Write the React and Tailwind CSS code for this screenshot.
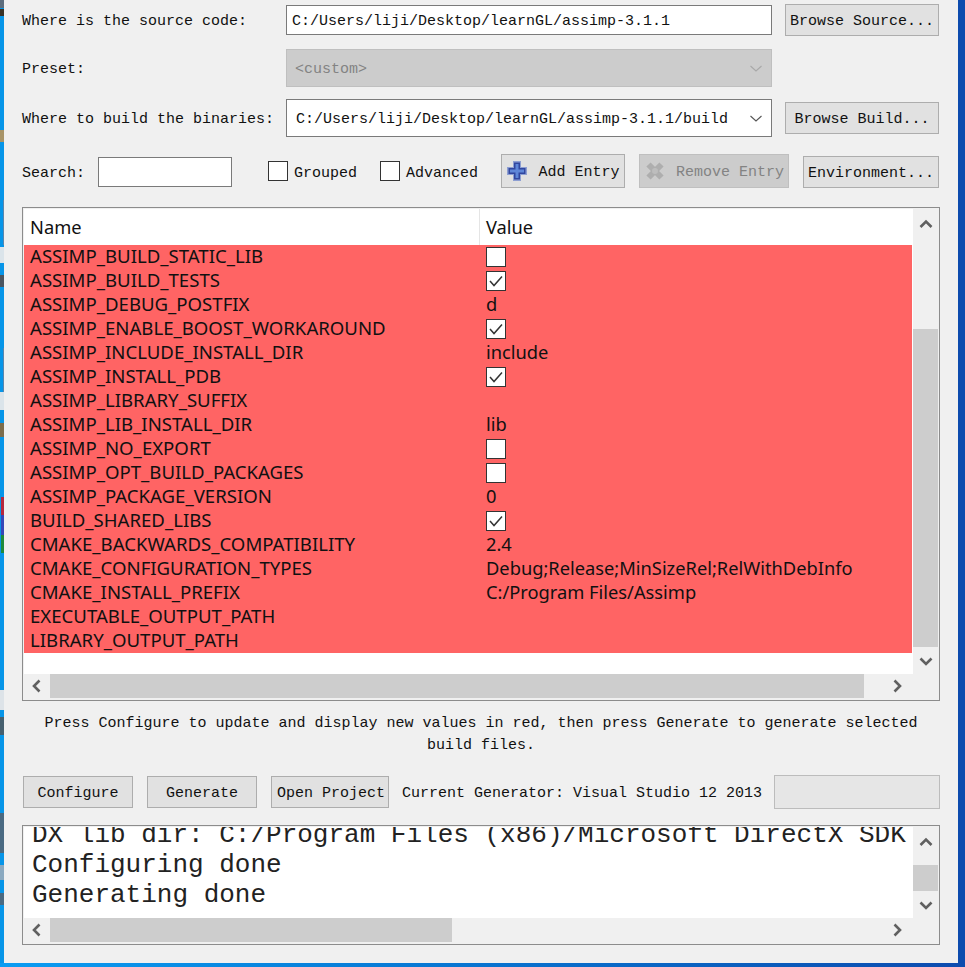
const ui = "font-['Liberation_Mono',monospace] text-[15px] text-[#111]";
const Chev = ({ dir, thin, light }) => {
  const pts = { up: "1.500,10 7,4.500 12.500,10", down: "1.500,4.500 7,10 12.500,4.500", left: "9.500,1.500 4,7 9.500,12.500", right: "4.500,1.500 10,7 4.500,12.500" }[dir];
  const thinPts = { down: "1.500,5 7,10 12.500,5" }[dir];
  return (
    <svg width="14" height="14" viewBox="0 0 14 14" fill="none">
      <polyline points={thin ? thinPts : pts} stroke={light ? "#a8a8a8" : thin ? "#555" : "#606060"} strokeWidth={thin ? 1.1 : 2.6} />
    </svg>
  );
};
const Check = () => (
  <svg width="18" height="18" viewBox="0 0 18 18" fill="none">
    <polyline points="3,9 7,13.500 15,4.500" stroke="#333" strokeWidth="1.500" />
  </svg>
);
const Btn = ({ w, h = "h-8", children, disabled }) => (
  <div className={`${w} ${h} shrink-0 flex items-center justify-center whitespace-nowrap border ${disabled ? "bg-[#cccccc] border-[#bfbfbf] text-[#838383]" : "bg-[#e1e1e1] border-[#adadad]"}`}>
    <span className="translate-y-0.5 flex items-center">{children}</span>
  </div>
);
const rows = [
  ["ASSIMP_BUILD_STATIC_LIB", "off"],
  ["ASSIMP_BUILD_TESTS", "on"],
  ["ASSIMP_DEBUG_POSTFIX", "d"],
  ["ASSIMP_ENABLE_BOOST_WORKAROUND", "on"],
  ["ASSIMP_INCLUDE_INSTALL_DIR", "include"],
  ["ASSIMP_INSTALL_PDB", "on"],
  ["ASSIMP_LIBRARY_SUFFIX", ""],
  ["ASSIMP_LIB_INSTALL_DIR", "lib"],
  ["ASSIMP_NO_EXPORT", "off"],
  ["ASSIMP_OPT_BUILD_PACKAGES", "off"],
  ["ASSIMP_PACKAGE_VERSION", "0"],
  ["BUILD_SHARED_LIBS", "on"],
  ["CMAKE_BACKWARDS_COMPATIBILITY", "2.4"],
  ["CMAKE_CONFIGURATION_TYPES", "Debug;Release;MinSizeRel;RelWithDebInfo"],
  ["CMAKE_INSTALL_PREFIX", "C:/Program Files/Assimp"],
  ["EXECUTABLE_OUTPUT_PATH", ""],
  ["LIBRARY_OUTPUT_PATH", ""],
];
const Box = ({ on }) => (
  <div className="w-5 h-5 bg-white border border-[#333] flex items-center justify-center">{on && <Check />}</div>
);
const AddIcon = () => (
  <svg width="22" height="22" viewBox="0 0 22 22">
    <path d="M7 1h8v6h6v8h-6v6H7v-6H1V7h6z" fill="#8e9fd2" />
    <path d="M8 2.500h6v5.500h5.500v6H14v5.500H8V14H2.500V8H8z" fill="#31479f" />
    <path d="M9.500 4h3v5.500H18v3h-5.500V18h-3v-5.500H4v-3h5.500z" fill="#5f86d8" />
  </svg>
);
const RemoveIcon = () => (
  <svg width="22" height="22" viewBox="0 0 22 22" fill="none">
    <path d="M4.500 4.500l13 13M17.500 4.500l-13 13" stroke="#aeaeae" strokeWidth="6" />
    <circle cx="11" cy="11" r="3" fill="#bdbdbd" />
  </svg>
);
const Label = ({ w, children }) => <div className={`${w} shrink-0 translate-y-0.5`}>{children}</div>;
export default function App() {
  return (
    <div className="w-[965px] h-[967px] overflow-hidden flex flex-col bg-gradient-to-r from-[#0a9cf2] to-[#0d4bae]">
      <div className="flex h-[963px] shrink-0">
        <div className="relative w-1 shrink-0 bg-[#0795e8]">
          <div className="absolute left-0 top-0 w-1 h-2 bg-[#5d6d7d]" />
          <div className="absolute left-0 top-[9px] w-1 h-[7px] bg-[#3a3226]" />
          <div className="absolute left-0 top-[130px] w-1 h-3 bg-[#a89468]" />
          <div className="absolute left-[3px] top-[200px] w-px h-[45px] bg-[#5a86ad]" />
          <div className="absolute left-0 top-[247px] w-1 h-4 bg-[#dbe4ea]" />
          <div className="absolute left-0 top-[275px] w-1 h-3 bg-[#4a5560]" />
          <div className="absolute left-[3px] top-[348px] w-px h-[44px] bg-[#5a86ad]" />
          <div className="absolute left-0 top-[392px] w-1 h-[18px] bg-[#dbe4ea]" />
          <div className="absolute left-0 top-[423px] w-1 h-[14px] bg-[#7d6d4c]" />
          <div className="absolute left-px top-[497px] w-[3px] h-[18px] bg-[#b5283e]" />
          <div className="absolute left-px top-[515px] w-[3px] h-5 bg-[#3648b8]" />
          <div className="absolute left-px top-[535px] w-[3px] h-[18px] bg-[#1f8a3c]" />
          <div className="absolute left-0 top-[690px] w-1 h-5 bg-[#dde3e8]" />
          <div className="absolute left-0 top-[717px] w-1 h-[18px] bg-[#46606f]" />
          <div className="absolute left-0 top-[813px] w-1 h-10 bg-[#4a6a82]" />
          <div className="absolute left-0 top-[865px] w-1 h-[15px] bg-[#8aa9c0]" />
          <div className="absolute left-0 top-[893px] w-1 h-3 bg-[#4a6a82]" />
        </div>
        <div className={`w-[954px] shrink-0 bg-[#f0f0f0] pl-[18px] pt-1 flex flex-col ${ui}`}>
          <div className="flex items-center h-8">
            <Label w="w-[264px]">Where is the source code:</Label>
            <div className="w-[486px] h-[30px] bg-white border border-[#7a7a7a] flex items-center pl-[5px]"><span className="translate-y-0.5">C:/Users/liji/Desktop/learnGL/assimp-3.1.1</span></div>
            <div className="ml-[13px]"><Btn w="w-[154px]">Browse Source...</Btn></div>
          </div>
          <div className="flex items-center h-[38px] mt-[13px]">
            <Label w="w-[264px]">Preset:</Label>
            <div className="w-[486px] h-[38px] bg-[#cccccc] border border-[#bfbfbf] flex items-center justify-between pl-2 pr-2 text-[#838383]">
              <span className="translate-y-0.5">&lt;custom&gt;</span><Chev dir="down" thin light />
            </div>
          </div>
          <div className="flex items-center h-[38px] mt-3">
            <Label w="w-[264px]">Where to build the binaries:</Label>
            <div className="w-[486px] h-[38px] bg-white border border-[#7a7a7a] flex items-center justify-between pl-[9px] pr-2">
              <span className="translate-y-0.5">C:/Users/liji/Desktop/learnGL/assimp-3.1.1/build</span><Chev dir="down" thin />
            </div>
            <div className="ml-[13px]"><Btn w="w-[154px]">Browse Build...</Btn></div>
          </div>
          <div className="flex items-center h-[34px] mt-[17px]">
            <div className="w-[76px] shrink-0 translate-y-[3px]">Search:</div>
            <div className="w-[134px] h-[30px] mt-0.5 bg-white border border-[#7a7a7a] shrink-0" />
            <div className="ml-9 flex items-center gap-1.5 w-[112px] shrink-0"><Box /><span className="translate-y-[3px]">Grouped</span></div>
            <div className="flex items-center gap-1.5 w-[121px] shrink-0"><Box /><span className="translate-y-[3px]">Advanced</span></div>
            <Btn w="w-[124px]" h="h-[34px]"><span className="flex items-center gap-[10px]"><span className="-translate-y-0.5"><AddIcon /></span>Add Entry</span></Btn>
            <div className="ml-[14px]"><Btn w="w-[150px]" h="h-[34px]" disabled><span className="flex items-center gap-[10px]"><span className="-translate-y-0.5"><RemoveIcon /></span>Remove Entry</span></Btn></div>
            <div className="ml-[14px] self-end"><Btn w="w-[136px]">Environment...</Btn></div>
          </div>
          <div className="w-[918px] h-[494px] mt-[19px] border border-[#8c8c8c] p-px flex flex-col font-['Noto_Sans',sans-serif] text-[18.3px] text-[#111]">
            <div className="flex h-[465px]">
              <div className="w-[889px] bg-white flex flex-col">
                <div className="h-9 flex items-center shrink-0">
                  <div className="w-[456px] h-full pl-[6px] flex items-center border-r border-[#e5e5e5]">Name</div>
                  <div className="pl-[6px]">Value</div>
                </div>
                <div className="w-[888px] bg-[#ff6464] flex flex-col">
                  {rows.map(([n, v]) => (
                    <div key={n} className="h-6 flex items-center leading-6">
                      <div className="w-[456px] pl-[6px] pb-0.5 whitespace-nowrap text-[18.6px]">{n}</div>
                      <div className="pl-[6px] whitespace-nowrap">
                        {v === "on" ? <Box on /> : v === "off" ? <Box /> : <div className="pb-0.5">{v}</div>}
                      </div>
                    </div>
                  ))}
                </div>
              </div>
              <div className="w-[25px] flex flex-col">
                <div className="h-[30px] flex items-center justify-center"><Chev dir="up" /></div>
                <div className="mt-[90px] h-[318px] bg-[#cdcdcd] shrink-0" />
                <div className="flex-1 flex items-center justify-center"><Chev dir="down" /></div>
              </div>
            </div>
            <div className="flex h-6 items-stretch">
              <div className="w-[26px] flex items-center justify-center"><Chev dir="left" /></div>
              <div className="w-[814px] bg-[#cdcdcd]" />
              <div className="flex-1 flex items-center justify-end pr-[34px]"><Chev dir="right" /></div>
            </div>
          </div>
          <div className="w-[918px] mt-[10px] px-5 text-center leading-[22px] translate-y-0.5">Press Configure to update and display new values in red, then press Generate to generate selected build files.</div>
          <div className="flex items-center h-[34px] mt-5 pl-px">
            <Btn w="w-[110px]">Configure</Btn>
            <div className="ml-[14px]"><Btn w="w-[110px]">Generate</Btn></div>
            <div className="ml-[14px]"><Btn w="w-[118px]"><span className="pl-[2px]">Open Project</span></Btn></div>
            <Label w="ml-[13px] w-[372px]">Current Generator: Visual Studio 12 2013</Label>
            <div className="w-[166px] h-[34px] bg-[#e6e6e6] border border-[#bcbcbc] shrink-0" />
          </div>
          <div className="w-[918px] h-[120px] mt-4 border border-[#8c8c8c] p-px flex flex-col">
            <div className="flex h-[91px]">
              <div className="w-[889px] bg-white overflow-hidden pl-2 font-['Liberation_Mono',monospace] text-[26px] leading-[30px] whitespace-nowrap text-[#222]">
                <div className="-mt-[7px]">DX lib dir: C:/Program Files (x86)/Microsoft DirectX SDK</div>
                <div>Configuring done</div>
                <div>Generating done</div>
              </div>
              <div className="w-[25px] flex flex-col">
                <div className="h-[30px] flex items-center justify-center"><Chev dir="up" /></div>
                <div className="h-[26px] bg-[#cdcdcd] mt-[8px]" />
                <div className="flex-1 flex items-center justify-center"><Chev dir="down" /></div>
              </div>
            </div>
            <div className="flex h-6 items-stretch">
              <div className="w-[26px] flex items-center justify-center"><Chev dir="left" /></div>
              <div className="w-[402px] bg-[#cdcdcd]" />
              <div className="flex-1 flex items-center justify-end pr-[34px]"><Chev dir="right" /></div>
            </div>
          </div>
        </div>
        <div className="flex-1 bg-[#0d4bae]" />
      </div>
    </div>
  );
}
